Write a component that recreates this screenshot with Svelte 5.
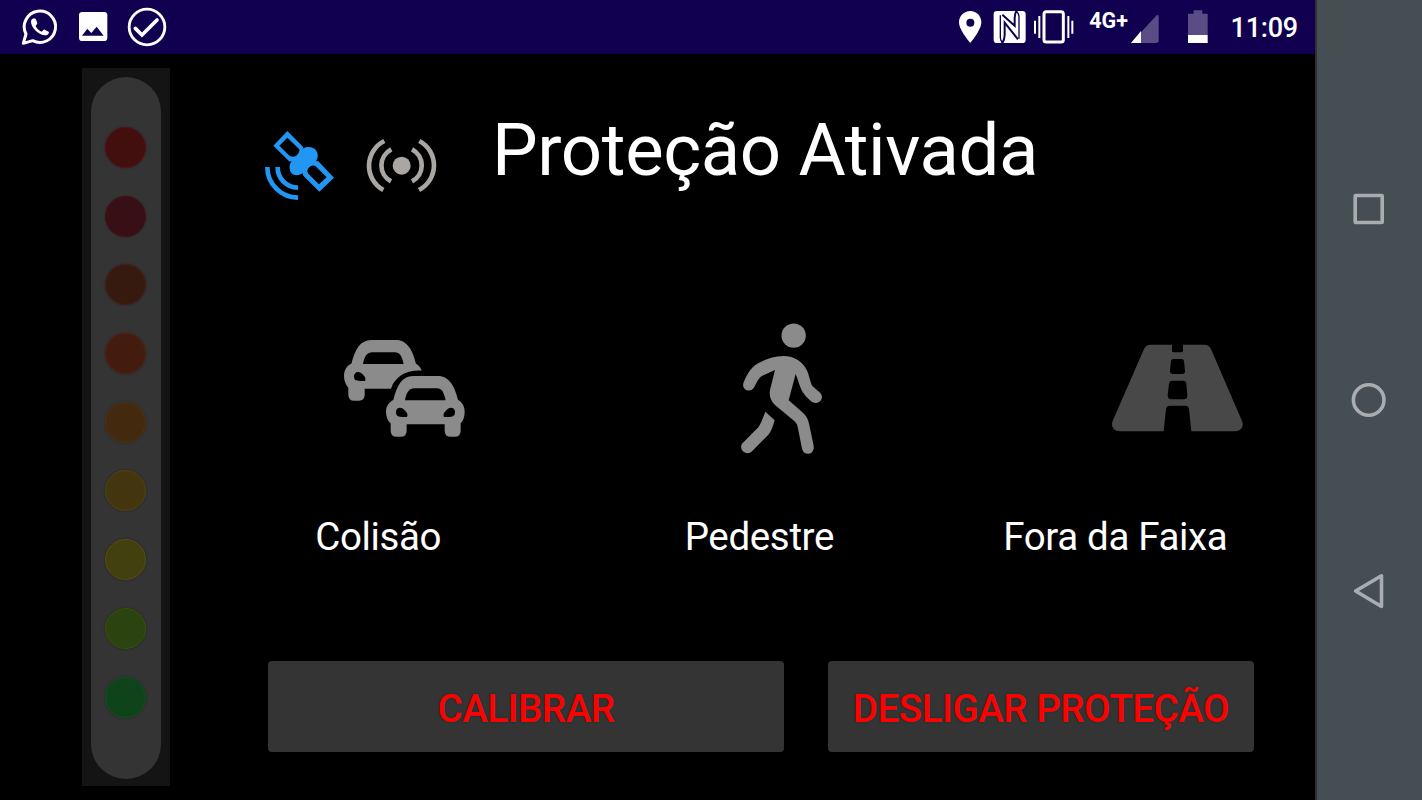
<script>
    const leds = [
        { color: "#430e0e", borde: "#541112" },
        { color: "#370f14", borde: "#441019" },
        { color: "#371a0f", borde: "#4b1e10" },
        { color: "#431b0f", borde: "#57210f" },
        { color: "#43290e", borde: "#563110" },
        { color: "#43360f", borde: "#54430f" },
        { color: "#43400f", borde: "#55500f" },
        { color: "#2a430f", borde: "#34520f" },
        { color: "#0f431a", borde: "#0f5420" },
    ];
    let protecao = true;
</script>

<div class="screen">
    <div class="main">
        <div class="status-bar">
            <div class="notifications">
                <svg width="40" height="54" viewBox="60 0 120 162">
                    <path d="M70 130 L78 102 A47 47 0 1 1 98 122 Z" fill="none" stroke="#fff" stroke-width="9" stroke-linejoin="round" />
                    <path d="M97 57 C102 52 107 55 109 61 L112 70 C111 75 107 76 107 79 C111 87 117 92 125 95 C129 93 130 88 134 89 L146 95 C149 101 141 107 134 106 C112 103 94 82 93 66 C93 62 94 59 97 57Z" fill="#fff" />
                </svg>
                <svg width="40" height="54" viewBox="220 0 120 162">
                    <path fill-rule="evenodd" d="M248 36 H313 Q323 36 323 46 V113 Q323 123 313 123 H248 Q238 123 238 113 V46 Q238 36 248 36Z M247 107 H312 L291 80 L275 99 L263 86Z" fill="#fff" />
                </svg>
                <svg width="44" height="54" viewBox="374 0 132 162">
                    <circle cx="440" cy="81" r="53.500" fill="none" stroke="#fff" stroke-width="8.500" />
                    <path d="M405 85 L425 105 L470 60" fill="none" stroke="#fff" stroke-width="11" stroke-linecap="round" />
                </svg>
            </div>
            <div class="system">
                <svg width="114" height="54" viewBox="48 0 342 162" fill="#fff">
                    <path fill-rule="evenodd" d="M88 33 C107 33 121 48 121 67 C121 91 88 129 88 129 C88 129 54 91 54 67 C54 48 69 33 88 33Z M88 56 A12 12 0 1 0 88 80 A12 12 0 1 0 88 56Z" />
                    <rect x="158" y="33" width="96" height="96" rx="10" />
                    <g fill="none" stroke="#10004f" stroke-width="6">
                        <path d="M184 44 L221 77 V54 Q221 40 227 32" />
                        <path d="M183 130 Q191 120 191 106 V68 L231 118" />
                        <path d="M178 46 V113 Q178 122 186 130" stroke-width="4" />
                        <path d="M224 32 Q234 40 234 50 V116" stroke-width="4" />
                    </g>
                    <path d="M279 62 h6 v39 h-6z M292 48 h6 v66 h-6z M379 48 h6 v66 h-6z M391 62 h6 v39 h-6z" />
                    <rect x="309" y="35" width="58" height="91" rx="7" fill="none" stroke="#fff" stroke-width="9" />
                </svg>
                <span class="network">4G+</span>
                <svg class="signal" width="32" height="54" viewBox="570 0 96 162">
                    <path d="M573 129 L650 46 Q656 42 656 50 V121 Q656 129 648 129Z" fill="#5c4c85" />
                    <path d="M573 129 L603 93 V129Z" fill="#fff" />
                </svg>
                <svg class="battery" width="24" height="54" viewBox="738 0 72 162">
                    <path d="M744 41 H761 V31 H787 V41 H803 V105 H744Z" fill="#5c4c85" />
                    <path d="M744 105 H803 V129 H744Z" fill="#fff" />
                </svg>
                <span class="clock">11:09</span>
            </div>
        </div>

        <div class="body">
            <div class="meter">
                <div class="track">
                    {#each leds as led}
                        <div class="led" style="background: {led.color}; border-color: {led.borde}"></div>
                    {/each}
                </div>
            </div>

            <div class="content">
                <div class="header">
                    <svg width="100" height="110" viewBox="0 0 300 330" fill="#2196f3">
                        <path fill-rule="evenodd" d="M112 63 L159 110 Q160 114 157 117 C170 107 192 111 199 122 C206 134 204 144 198 153 L205 154 L252 203 L208 245 L160 197 L158 190 C143 200 127 196 122 186 C116 172 119 162 125 153 L119 155 L70 107Z M112 83 L88 107 L117 136 C122 141 132 141 139 137 C146 130 149 125 148 118Z M205 177 C199 170 192 163 181 169 C173 176 169 183 175 191 L207 223 L230 202Z" />
                        <g fill="none" stroke="#2196f3" stroke-width="14">
                            <path d="M52 171 A92 92 0 0 0 144 263" />
                            <path d="M83 171 A61 61 0 0 0 144 233" />
                        </g>
                    </svg>
                    <svg width="110" height="110" viewBox="300 0 330 330">
                        <circle cx="455" cy="167" r="27" fill="#a9a6a4" />
                        <g fill="none" stroke="#a9a6a4" stroke-width="14">
                            <path d="M403 93 A83 83 0 0 0 400 240" />
                            <path d="M424 118 A54 54 0 0 0 423 214" />
                            <path d="M486 118 A54 54 0 0 1 486 214" />
                            <path d="M508 93 A83 83 0 0 1 507 240" />
                        </g>
                    </svg>
                    <h1>{protecao ? "Proteção Ativada" : "Proteção Desativada"}</h1>
                </div>

                <div class="icons">
                    <svg width="150" height="130" viewBox="0 0 450 390" fill="#8b8b8b">
                        <path fill-rule="evenodd" d="M64 131 C76 87 91 60 124 60 H198 C231 60 248 90 258 131 C267 136 271 141 275 152 C229 149 195 170 183 206 H104 V225 Q104 242 87 242 H73 Q55 242 55 224 V203 C47 194 42 183 42 168 C42 150 51 136 64 131Z M99 132 H221 C215 107 209 97 195 97 H127 C112 97 104 107 99 132Z M72 169 C72 184 82 183 105 183 C109 175 104 169 97 162 C87 151 72 155 72 169Z" />
                        <path fill-rule="evenodd" d="M190 240 C201 196 216 168 249 168 H324 C357 168 374 198 384 239 C397 246 404 260 404 275 C404 290 400 302 392 310 V332 Q392 350 374 350 H362 Q344 350 344 332 V313 H230 V332 Q230 350 212 350 H200 Q182 350 182 332 V310 C173 302 168 290 168 275 C168 259 177 246 190 240Z M225 241 H347 C341 215 335 205 321 205 H253 C238 205 230 216 225 241Z M198 276 C198 291 208 291 231 291 C235 283 230 277 223 270 C213 259 198 263 198 276Z M375 276 C375 291 365 291 342 291 C338 283 343 277 350 270 C360 259 375 263 375 276Z" />
                    </svg>
                    <svg width="120" height="160" viewBox="0 0 360 480" fill="#8b8b8b">
                        <circle cx="221" cy="77" r="36.500" />
                        <path d="M70 220 C77 200 90 174 112 161 C135 149 160 138 190 138 C225 138 250 156 262 184 C270 205 272 222 278 229 L301 249 C313 262 301 280 285 279 C274 278 254 257 246 243 C238 228 235 210 227 192 L206 271 L249 308 C261 319 265 330 268 345 L281 408 C284 435 252 440 246 416 L233 350 C231 341 226 336 220 331 L165 285 C152 273 147 258 150 240 L165 180 L127 197 C118 202 112 212 103 231 C92 251 65 240 70 220Z" />
                        <path d="M136 305 L164 331 C158 350 155 363 145 374 L97 423 C80 440 55 420 66 401 L115 352 C123 341 128 325 136 305Z" />
                    </svg>
                    <svg width="170" height="120" viewBox="0 0 510 360" fill="#484848">
                        <path fill-rule="evenodd" d="M182 44 H246 V62 Q246 67 251 67 H274 Q279 67 279 62 V44 H343 Q357 44 363 57 L456 273 C463 290 452 304 435 304 H304 L297 238 Q296 227 286 227 H240 Q229 227 228 238 L221 304 H90 C71 304 62 290 68 273 L162 57 Q168 44 182 44Z M250 87 Q244 87 243 93 L240 124 Q240 132 248 132 H277 Q285 132 285 124 L282 93 Q281 87 275 87Z M247 152 Q238 152 237 161 L233 196 Q233 208 244 208 H281 Q293 208 292 196 L289 161 Q288 152 279 152Z" />
                    </svg>
                </div>

                <div class="labels">
                    <span>Colisão</span>
                    <span>Pedestre</span>
                    <span>Fora da Faixa</span>
                </div>

                <div class="buttons">
                    <button class="calibrar">CALIBRAR</button>
                    <button class="desligar">DESLIGAR PROTEÇÃO</button>
                </div>
            </div>
        </div>
    </div>

    <div class="nav">
        <svg width="44" height="44" viewBox="0 0 44 44"><rect x="8.200" y="8.500" width="27" height="27" rx="0.500" /></svg>
        <svg width="44" height="44" viewBox="0 0 44 44"><circle cx="21.700" cy="22" r="15.300" /></svg>
        <svg width="44" height="44" viewBox="0 0 44 44"><path d="M8.600 22 L34.500 6.800 V37.500Z" /></svg>
    </div>
</div>

<style>
    :global(body) {
        margin: 0;
        background: #000;
    }
    .screen {
        display: flex;
        width: 1422px;
        height: 800px;
        overflow: hidden;
        background: #000;
        color: #fff;
        font-family: Roboto, sans-serif;
    }
    .main {
        width: 1315px;
        display: flex;
        flex-direction: column;
    }
    .status-bar {
        height: 53.5px;
        background: #10004f;
        display: flex;
        justify-content: space-between;
        padding: 0 17px 0 20px;
        overflow: hidden;
    }
    .notifications {
        display: flex;
        gap: 13.3px;
    }
    .notifications svg:last-child {
        margin-left: -2px;
    }
    .system {
        display: flex;
    }
    .system svg {
        overflow: visible;
        flex: none;
    }
    .network {
        font-size: 21.5px;
        font-weight: 700;
        line-height: 41px;
        margin-left: 18px;
    }
    .signal {
        margin-left: 2px;
    }
    .battery {
        margin-left: 24px;
    }
    .clock {
        font-size: 27px;
        font-weight: 500;
        line-height: 57px;
        letter-spacing: -0.2px;
        margin-left: 20.5px;
    }
    .body {
        display: flex;
        flex: 1;
    }
    .meter {
        width: 70px;
        height: 702px;
        margin: 14.5px 0 0 81.6px;
        padding: 9px 9px 7px;
        background: #141414;
    }
    .track {
        height: 702px;
        box-sizing: border-box;
        padding: 50px 1px 0 0;
        border-radius: 35px;
        background: #343434;
        display: flex;
        flex-direction: column;
        align-items: center;
        gap: 27.7px;
    }
    .led {
        box-sizing: border-box;
        width: 41px;
        height: 41px;
        flex: none;
        border: 1px solid;
        border-radius: 50%;
        box-shadow: 0 0 2px #222;
    }
    .content {
        margin-left: 80.4px;
        padding-top: 56.5px;
        width: 1065px;
    }
    .header {
        display: flex;
        height: 110px;
    }
    h1 {
        margin: 0 0 0 32px;
        font-size: 72.5px;
        font-weight: 400;
        line-height: 81px;
        letter-spacing: -0.38px;
        white-space: nowrap;
    }
    .icons {
        display: flex;
        height: 160px;
        padding: 90px 0 0 80px;
    }
    .icons svg:first-child {
        margin: 10px 240px 0 0;
    }
    .icons svg:last-child {
        margin: 20px 0 0 250px;
    }
    .labels {
        display: grid;
        grid-template-columns: 369.5px 318.5px auto;
        padding: 41.5px 0 0 65.2px;
        font-size: 38.5px;
        line-height: 50px;
        letter-spacing: -0.35px;
    }
    .buttons {
        display: flex;
        gap: 44px;
        padding: 99.5px 0 0 18px;
    }
    button {
        height: 91px;
        padding: 4px 0 0;
        border: 0;
        border-radius: 4px;
        background: #343434;
        color: #f00;
        font-family: inherit;
        font-size: 38.5px;
        font-weight: 500;
        letter-spacing: -0.45px;
        text-shadow: 0 0 2px #033;
        white-space: nowrap;
    }
    .calibrar {
        width: 516px;
    }
    .desligar {
        width: 426px;
    }
    .nav {
        box-sizing: border-box;
        width: 107px;
        padding-right: 2px;
        border-left: 2px solid #2b3135;
        background: #454e53;
        display: flex;
        flex-direction: column;
        align-items: center;
        justify-content: center;
        gap: 147px;
    }
    .nav svg {
        fill: none;
        stroke: #a9adb0;
        stroke-width: 3.6;
        stroke-linejoin: round;
    }
</style>
